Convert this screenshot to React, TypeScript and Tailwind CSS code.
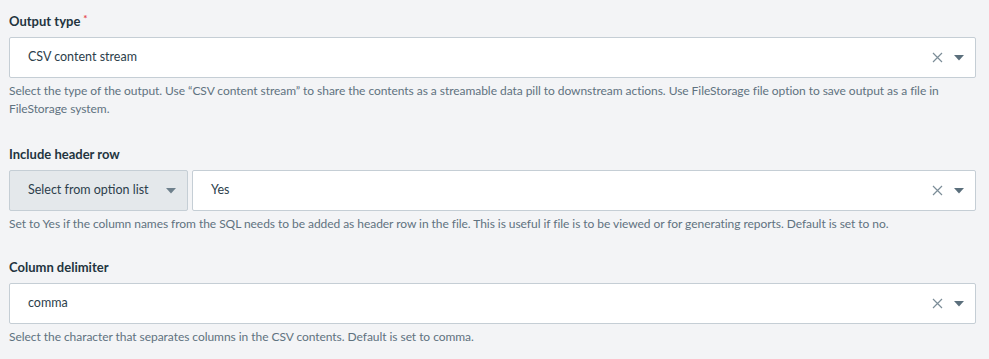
import React from "react";

const font = { fontFamily: "Lato, 'Open Sans', sans-serif" };

function Caret({ color = "#5b6f7c" }: { color?: string }) {
    return (
        <svg width="10" height="6" viewBox="0 0 10 6">
            <path d="M0 0 L10 0 L5 5.5 Z" fill={color} />
        </svg>
    );
}

function ClearIcon() {
    return (
        <svg width="11" height="11" viewBox="0 0 11 11">
            <path d="M1 1 L10 10 M10 1 L1 10" stroke="#7c8d98" strokeWidth="1.2" />
        </svg>
    );
}

function SelectBox({ value }: { value: string }) {
    return (
        <div className="flex-1 h-[41px] bg-white border border-[#c5ced5] rounded-[2px] flex flex-row items-center pl-[18px] pr-[11px]">
            <span className="text-[12.5px] text-[#2c3e4b]">{value}</span>
            <div className="ml-auto flex flex-row items-center gap-[11px]">
                <ClearIcon />
                <Caret />
            </div>
        </div>
    );
}

function Label({ text, required }: { text: string, required?: boolean }) {
    return (
        <div className="h-5 flex flex-row items-center mb-[5px] text-[13px] font-bold text-[#23343f]">
            {text}
            {required ? <span className="text-[#e5484d] text-[10px] ml-[3px] -mt-2">*</span> : null}
        </div>
    );
}

function Help({ children }: { children: React.ReactNode }) {
    return <p className="mt-[4px] text-[12px] leading-[18px] text-[#5f7280] tracking-[-0.05px] pr-4">{children}</p>;
}

export default function App() {
    return (
        <div style={font} className="w-[989px] h-[359px] bg-[#f3f4f6] pt-[12px] pl-[9px] pr-[13px] overflow-hidden">
            <div className="mb-[27px]">
                <Label text="Output type" required />
                <SelectBox value="CSV content stream" />
                <Help>
                    Select the type of the output. Use “CSV content stream” to share the contents as a streamable data pill to downstream actions. Use FileStorage file option to save output as a file in FileStorage system.
                </Help>
            </div>
            <div className="mb-[25px]">
                <Label text="Include header row" />
                <div className="flex flex-row gap-[4px]">
                    <div className="w-[179px] h-[41px] bg-[#e4e8eb] border border-[#c5ced5] rounded-[2px] flex flex-row items-center pl-[18px] pr-[11px]">
                        <span className="text-[12.5px] text-[#2c3e4b]">Select from option list</span>
                        <div className="ml-auto"><Caret color="#6e808c" /></div>
                    </div>
                    <SelectBox value="Yes" />
                </div>
                <Help>
                    Set to Yes if the column names from the SQL needs to be added as header row in the file. This is useful if file is to be viewed or for generating reports. Default is set to no.
                </Help>
            </div>
            <div>
                <Label text="Column delimiter" />
                <SelectBox value="comma" />
                <Help>
                    Select the character that separates columns in the CSV contents. Default is set to comma.
                </Help>
            </div>
        </div>
    );
}
